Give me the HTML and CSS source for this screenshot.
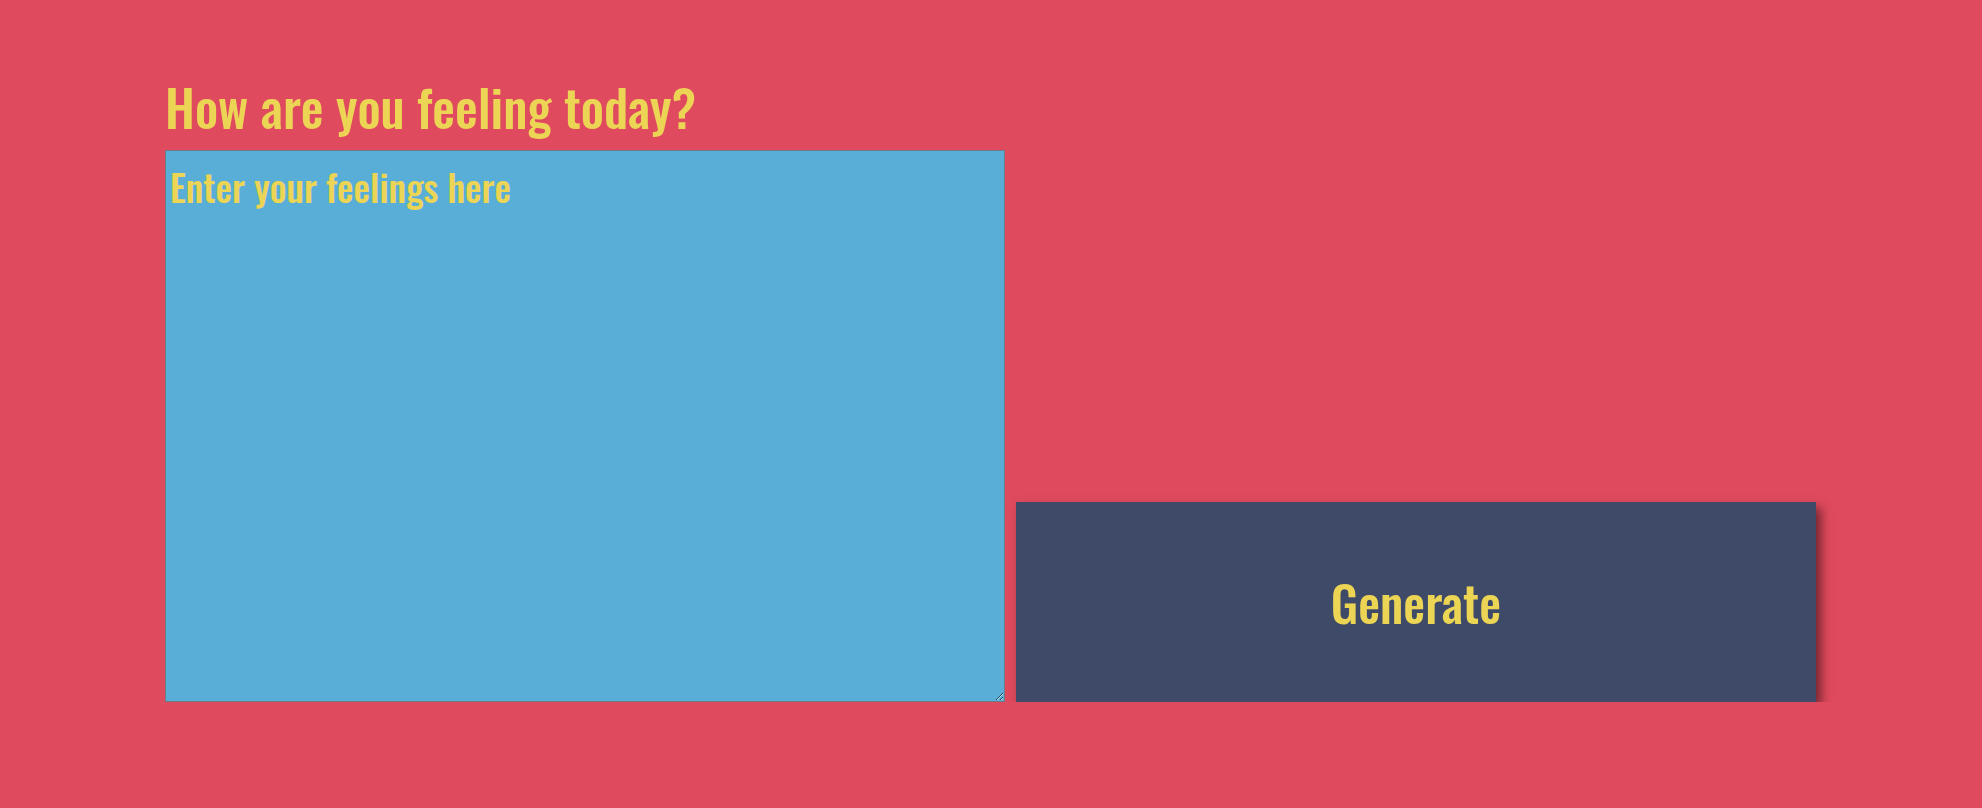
FILE: index.html
```html
<!DOCTYPE html>
<html lang="en">
<head>
  <meta charset="UTF-8" />
  <meta name="viewport" content="width=device-width, initial-scale=1.0"/>
  <title>Feelings</title>
  <link rel="stylesheet" href="styles.css">
</head>
<body>
  <div class="container">
    <h1>How are you feeling today?</h1>
    <div class="row">
      <textarea id="feelings" placeholder="Enter your feelings here"></textarea>
      <button id="generate">Generate</button>
    </div>
  </div>
</body>
</html>
```
FILE: styles.css
```css
:root {
  --background-color: #e04a5e;
  --text-color: #ecd455;
  --input-color: #58aed6;
  --button-color: #3e4a68;
}

body {
  margin: 0;
  padding: 0;
  background-color: var(--background-color);
  color: var(--text-color);
  font-family: Oswald, "Roboto Condensed", sans-serif;
}

.container {
  padding: 76px 0 0 165px;
}

h1 {
  font-size: 51px;
  font-weight: 500;
  line-height: 1.2;
  margin: 0 0 13px;
}

.row {
  display: flex;
  align-items: flex-end;
  gap: 11px;
}

#feelings {
  box-sizing: border-box;
  width: 840px;
  height: 552px;
  margin: 0;
  padding: 8px 4px;
  border: 1px solid #6b7c86;
  background-color: var(--input-color);
  color: var(--text-color);
  font-family: Oswald, "Roboto Condensed", sans-serif;
  font-size: 37px;
  font-weight: 500;
}

#feelings::placeholder {
  color: var(--text-color);
  opacity: 1;
}

#generate {
  width: 800px;
  height: 200px;
  border: none;
  background-color: var(--button-color);
  color: var(--text-color);
  font-family: Oswald, "Roboto Condensed", sans-serif;
  font-size: 49px;
  font-weight: 500;
  box-shadow: 5px 6px 10px rgba(0, 0, 0, 0.5);
  cursor: pointer;
}
```
